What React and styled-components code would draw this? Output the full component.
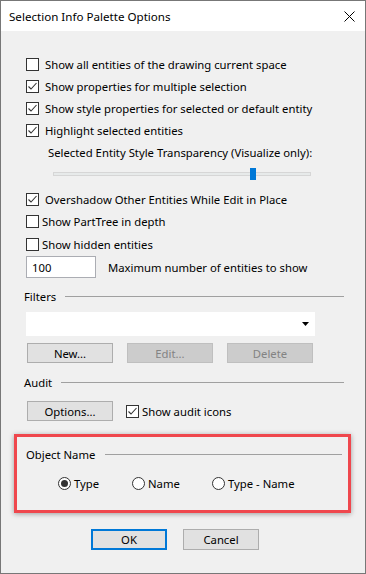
import styled, { createGlobalStyle } from 'styled-components';

const Global = createGlobalStyle`
  html, body { margin: 0; padding: 0; background: #ffffff; }
  * { box-sizing: border-box; }
  body { font-family: "Noto Sans", "Liberation Sans", sans-serif; font-size: 11.3px; color: #000; }
`;

const Window = styled.div`
  width: 366px;
  height: 574px;
  border: 1px solid #777777;
  background: #f0f0f0;
  display: flex;
  flex-direction: column;
`;

const TitleBar = styled.div`
  height: 30px;
  background: #ffffff;
  display: flex;
  align-items: center;
  justify-content: space-between;
  padding: 0 10px 0 8px;
  font-size: 11.6px;
`;

const Body = styled.div`
  display: flex;
  flex-direction: column;
  padding: 0 0 0 25px;
`;

const Row = styled.label`
  display: flex;
  align-items: center;
  height: ${(p) => p.$h || 22}px;
  margin-top: ${(p) => p.$mt || 0}px;
  margin-left: ${(p) => p.$ml || 0}px;
  gap: ${(p) => p.$gap || 6}px;
  white-space: nowrap;
`;

const Box = styled.span`
  width: 13px;
  height: 13px;
  border: 1px solid #333333;
  background: #ffffff;
  display: flex;
  align-items: center;
  justify-content: center;
  flex: none;
`;

const Slider = styled.div`
  position: relative;
  width: 258px;
  height: 22px;
  margin-left: 27px;
  display: flex;
  align-items: center;
`;

const Track = styled.div`
  width: 100%;
  height: 4px;
  background: #e7eaea;
  border: 1px solid #d6d6d6;
`;

const Thumb = styled.div`
  position: absolute;
  left: 197px;
  top: 5px;
  width: 6px;
  height: 12px;
  background: #0078d7;
`;

const Input = styled.div`
  width: 70px;
  height: 22px;
  background: #ffffff;
  border: 1px solid #abadb3;
  padding-left: 5px;
  display: flex;
  align-items: center;
  flex: none;
`;

const GroupHead = styled.div`
  display: flex;
  align-items: center;
  gap: ${(p) => p.$gap || 9}px;
  height: 20px;
  margin-top: ${(p) => p.$mt || 0}px;
  margin-left: ${(p) => p.$ml || -2}px;
  width: ${(p) => p.$w || 320}px;
  &::after {
    content: '';
    flex: 1;
    height: 1px;
    background: #a0a0a0;
  }
`;

const Select = styled.div`
  width: 289px;
  height: 24px;
  margin-top: 6px;
  background: #ffffff;
  display: flex;
  align-items: center;
  justify-content: flex-end;
  padding-right: 6px;
`;

const ButtonRow = styled.div`
  display: flex;
  gap: ${(p) => p.$gap || 14}px;
  margin-top: ${(p) => p.$mt || 0}px;
  margin-left: ${(p) => p.$ml || 0}px;
  align-items: center;
`;

const Button = styled.div`
  width: ${(p) => p.$w || 86}px;
  height: ${(p) => p.$h || 20}px;
  display: flex;
  align-items: center;
  justify-content: center;
  background: ${(p) => (p.$disabled ? '#cccccc' : '#e1e1e1')};
  border: ${(p) => (p.$default ? '2px solid #0078d7' : `1px solid ${p.$disabled ? '#bfbfbf' : '#adadad'}`)};
  color: ${(p) => (p.$disabled ? '#838383' : '#000000')};
`;

const Highlight = styled.div`
  margin: 12px 14px 0 13px;
  height: 79px;
  border: 3px solid #ef474d;
  box-shadow: 0 1px 5px rgba(0, 0, 0, 0.35);
  display: flex;
  flex-direction: column;
  padding: 7px 0 0 11px;
`;

const Radios = styled.div`
  display: flex;
  align-items: center;
  margin: 9px 0 0 30px;
`;

const Radio = styled.label`
  display: flex;
  align-items: center;
  gap: 3px;
  width: ${(p) => p.$w}px;
  height: 20px;
`;

const Circle = styled.span`
  width: 13px;
  height: 13px;
  border-radius: 50%;
  border: 1px solid #333333;
  background: #ffffff;
  display: flex;
  align-items: center;
  justify-content: center;
  flex: none;
  &::after {
    content: '';
    width: 7px;
    height: 7px;
    border-radius: 50%;
    background: ${(p) => (p.$on ? '#333333' : 'transparent')};
  }
`;

const Footer = styled.div`
  display: flex;
  justify-content: center;
  gap: 16px;
  margin-top: 16px;
  padding-right: 16px;
`;

const Check = ({ on }) => (
  <Box>
    {on && (
      <svg width="11" height="11" viewBox="0 0 11 11">
        <polyline points="1.5,5.5 4,8 9.5,2" fill="none" stroke="#333" strokeWidth="1.1" />
      </svg>
    )}
  </Box>
);

const CheckRow = ({ on, label, gap, mt }) => (
  <Row $gap={gap} $mt={mt}>
    <Check on={on} />
    <span>{label}</span>
  </Row>
);

export default function App() {
  return (
    <>
      <Global />
      <Window>
        <TitleBar>
          <span>Selection Info Palette Options</span>
          <svg width="11" height="11" viewBox="0 0 11 11">
            <path d="M0.5 0.5 L10.5 10.5 M10.5 0.5 L0.5 10.5" stroke="#000" strokeWidth="1" />
          </svg>
        </TitleBar>
        <Body>
          <CheckRow label="Show all entities of the drawing current space" mt={22} />
          <CheckRow on label="Show properties for multiple selection" />
          <CheckRow on label="Show style properties for selected or default entity" />
          <CheckRow on label="Highlight selected entities" />
          <Row $ml={22}>Selected Entity Style Transparency (Visualize only):</Row>
          <Slider>
            <Track />
            <Thumb />
          </Slider>
          <CheckRow on label="Overshadow Other Entities While Edit in Place" mt={3} />
          <CheckRow label="Show PartTree in depth" gap={3} />
          <CheckRow label="Show hidden entities" gap={3} mt={1} />
          <Row $gap={12} $mt={1}>
            <Input>100</Input>
            <span>Maximum number of entities to show</span>
          </Row>
          <GroupHead $mt={8}>Filters</GroupHead>
          <Select>
            <svg width="7" height="4" viewBox="0 0 7 4">
              <polygon points="0,0 7,0 3.5,4" fill="#000" />
            </svg>
          </Select>
          <ButtonRow $mt={7} $ml={1}>
            <Button>New...</Button>
            <Button $disabled>Edit...</Button>
            <Button $disabled>Delete</Button>
          </ButtonRow>
          <GroupHead $mt={9}>Audit</GroupHead>
          <ButtonRow $mt={8} $ml={1} $gap={13}>
            <Button>Options...</Button>
            <Row $gap={3}>
              <Check on />
              <span>Show audit icons</span>
            </Row>
          </ButtonRow>
        </Body>
        <Highlight>
          <GroupHead $ml={0} $w={316} $gap={10}>Object Name</GroupHead>
          <Radios>
            <Radio $w={74}>
              <Circle $on />
              Type
            </Radio>
            <Radio $w={80}>
              <Circle />
              Name
            </Radio>
            <Radio>
              <Circle />
              Type - Name
            </Radio>
          </Radios>
        </Highlight>
        <Footer>
          <Button $default $w={76} $h={21}>OK</Button>
          <Button $w={76} $h={21}>Cancel</Button>
        </Footer>
      </Window>
    </>
  );
}
